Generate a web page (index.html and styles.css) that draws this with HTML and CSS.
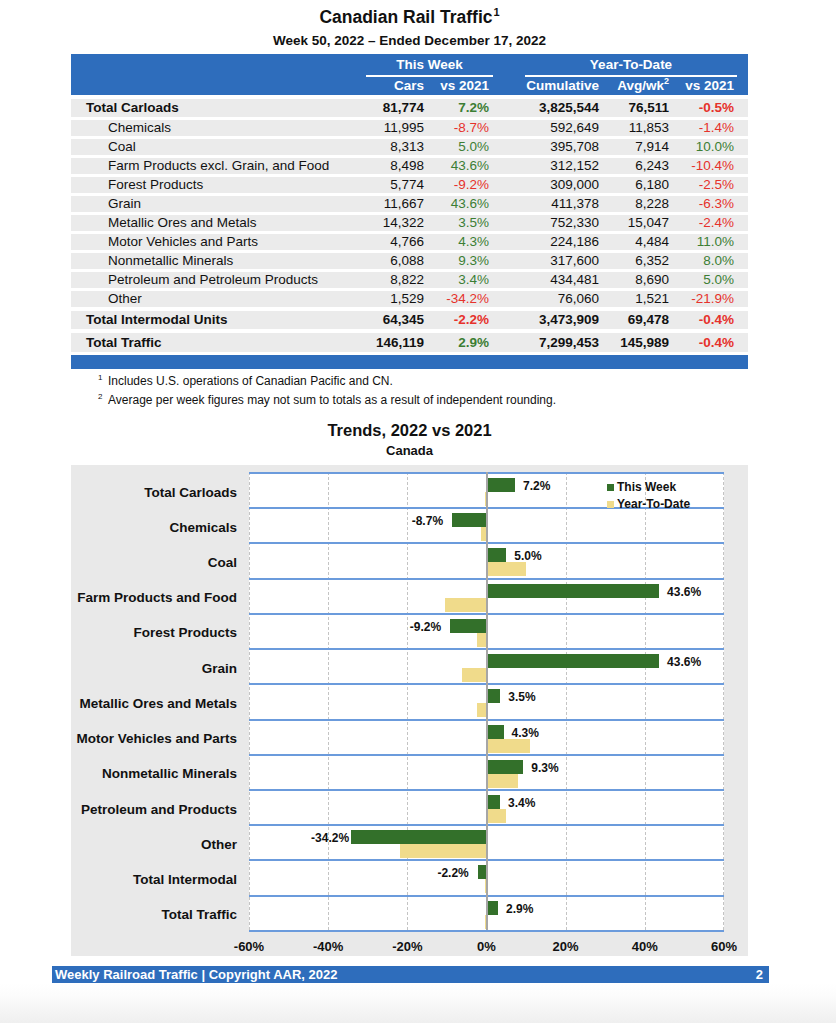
FILE: index.html
```html
<!DOCTYPE html>
<html lang="en">
<head>
<meta charset="utf-8">
<title>Canadian Rail Traffic</title>
<link rel="stylesheet" href="styles.css">
</head>
<body>
<div class="page">
  <div class="sheet">
    <h1 class="title">Canadian Rail Traffic<sup>1</sup></h1>
    <div class="subtitle">Week 50, 2022 – Ended December 17, 2022</div>

    <div class="tbl">
      <div class="thead">
        <div class="hrow1">
          <div class="grp grp-week">This Week</div>
          <div class="grp grp-ytd">Year-To-Date</div>
        </div>
        <div class="hrow2">
          <div></div>
          <div class="num">Cars</div>
          <div class="num c3">vs 2021</div>
          <div></div>
          <div class="num">Cumulative</div>
          <div class="num">Avg/wk<sup>2</sup></div>
          <div class="num c7">vs 2021</div>
          <div></div>
        </div>
      </div>

      <div class="row total first"><div class="lbl">Total Carloads</div><div class="num">81,774</div><div class="num c3 pos">7.2%</div><div></div><div class="num">3,825,544</div><div class="num">76,511</div><div class="num c7 neg">-0.5%</div><div></div></div>
      <div class="row"><div class="lbl sub">Chemicals</div><div class="num">11,995</div><div class="num c3 neg">-8.7%</div><div></div><div class="num">592,649</div><div class="num">11,853</div><div class="num c7 neg">-1.4%</div><div></div></div>
      <div class="row"><div class="lbl sub">Coal</div><div class="num">8,313</div><div class="num c3 pos">5.0%</div><div></div><div class="num">395,708</div><div class="num">7,914</div><div class="num c7 pos">10.0%</div><div></div></div>
      <div class="row"><div class="lbl sub">Farm Products excl. Grain, and Food</div><div class="num">8,498</div><div class="num c3 pos">43.6%</div><div></div><div class="num">312,152</div><div class="num">6,243</div><div class="num c7 neg">-10.4%</div><div></div></div>
      <div class="row"><div class="lbl sub">Forest Products</div><div class="num">5,774</div><div class="num c3 neg">-9.2%</div><div></div><div class="num">309,000</div><div class="num">6,180</div><div class="num c7 neg">-2.5%</div><div></div></div>
      <div class="row"><div class="lbl sub">Grain</div><div class="num">11,667</div><div class="num c3 pos">43.6%</div><div></div><div class="num">411,378</div><div class="num">8,228</div><div class="num c7 neg">-6.3%</div><div></div></div>
      <div class="row"><div class="lbl sub">Metallic Ores and Metals</div><div class="num">14,322</div><div class="num c3 pos">3.5%</div><div></div><div class="num">752,330</div><div class="num">15,047</div><div class="num c7 neg">-2.4%</div><div></div></div>
      <div class="row"><div class="lbl sub">Motor Vehicles and Parts</div><div class="num">4,766</div><div class="num c3 pos">4.3%</div><div></div><div class="num">224,186</div><div class="num">4,484</div><div class="num c7 pos">11.0%</div><div></div></div>
      <div class="row"><div class="lbl sub">Nonmetallic Minerals</div><div class="num">6,088</div><div class="num c3 pos">9.3%</div><div></div><div class="num">317,600</div><div class="num">6,352</div><div class="num c7 pos">8.0%</div><div></div></div>
      <div class="row"><div class="lbl sub">Petroleum and Petroleum Products</div><div class="num">8,822</div><div class="num c3 pos">3.4%</div><div></div><div class="num">434,481</div><div class="num">8,690</div><div class="num c7 pos">5.0%</div><div></div></div>
      <div class="row"><div class="lbl sub">Other</div><div class="num">1,529</div><div class="num c3 neg">-34.2%</div><div></div><div class="num">76,060</div><div class="num">1,521</div><div class="num c7 neg">-21.9%</div><div></div></div>
      <div class="row total gap"><div class="lbl">Total Intermodal Units</div><div class="num">64,345</div><div class="num c3 neg">-2.2%</div><div></div><div class="num">3,473,909</div><div class="num">69,478</div><div class="num c7 neg">-0.4%</div><div></div></div>
      <div class="row total gap tall"><div class="lbl">Total Traffic</div><div class="num">146,119</div><div class="num c3 pos">2.9%</div><div></div><div class="num">7,299,453</div><div class="num">145,989</div><div class="num c7 neg">-0.4%</div><div></div></div>
      <div class="endbar"></div>
    </div>

    <div class="notes">
      <p><span class="fn">1</span>Includes U.S. operations of Canadian Pacific and CN.</p>
      <p><span class="fn">2</span>Average per week figures may not sum to totals as a result of independent rounding.</p>
    </div>

    <h2 class="ctitle">Trends, 2022 vs 2021</h2>
    <div class="csub">Canada</div>

    <div class="chart">
      <div class="chart-body">
        <div class="cats">
          <div class="cat">Total Carloads</div>
          <div class="cat">Chemicals</div>
          <div class="cat">Coal</div>
          <div class="cat">Farm Products and Food</div>
          <div class="cat">Forest Products</div>
          <div class="cat">Grain</div>
          <div class="cat">Metallic Ores and Metals</div>
          <div class="cat">Motor Vehicles and Parts</div>
          <div class="cat">Nonmetallic Minerals</div>
          <div class="cat">Petroleum and Products</div>
          <div class="cat">Other</div>
          <div class="cat">Total Intermodal</div>
          <div class="cat">Total Traffic</div>
        </div>
        <div class="plot">
          <div class="gridlines"><span></span><span></span><span></span><span></span><span></span><span></span></div>
          <div class="prow"><div class="bar wk" style="left:237.5px;width:28.5px"></div><div class="bar ytd" style="left:235.52px;width:1.98px"></div><div class="val" style="left:274px">7.2%</div></div>
          <div class="prow"><div class="bar wk" style="left:203.06px;width:34.44px"></div><div class="bar ytd" style="left:231.96px;width:5.54px"></div><div class="val" style="right:280.94px">-8.7%</div></div>
          <div class="prow"><div class="bar wk" style="left:237.5px;width:19.79px"></div><div class="bar ytd" style="left:237.5px;width:39.58px"></div><div class="val" style="left:265.3px">5.0%</div></div>
          <div class="prow"><div class="bar wk" style="left:237.5px;width:172.58px"></div><div class="bar ytd" style="left:196.33px;width:41.17px"></div><div class="val" style="left:418.1px">43.6%</div></div>
          <div class="prow"><div class="bar wk" style="left:201.08px;width:36.42px"></div><div class="bar ytd" style="left:227.6px;width:9.9px"></div><div class="val" style="right:282.92px">-9.2%</div></div>
          <div class="prow"><div class="bar wk" style="left:237.5px;width:172.58px"></div><div class="bar ytd" style="left:212.56px;width:24.94px"></div><div class="val" style="left:418.1px">43.6%</div></div>
          <div class="prow"><div class="bar wk" style="left:237.5px;width:13.85px"></div><div class="bar ytd" style="left:228px;width:9.5px"></div><div class="val" style="left:259.35px">3.5%</div></div>
          <div class="prow"><div class="bar wk" style="left:237.5px;width:17.02px"></div><div class="bar ytd" style="left:237.5px;width:43.54px"></div><div class="val" style="left:262.5px">4.3%</div></div>
          <div class="prow"><div class="bar wk" style="left:237.5px;width:36.81px"></div><div class="bar ytd" style="left:237.5px;width:31.67px"></div><div class="val" style="left:282.3px">9.3%</div></div>
          <div class="prow"><div class="bar wk" style="left:237.5px;width:13.46px"></div><div class="bar ytd" style="left:237.5px;width:19.79px"></div><div class="val" style="left:258.96px">3.4%</div></div>
          <div class="prow"><div class="bar wk" style="left:102.13px;width:135.37px"></div><div class="bar ytd" style="left:150.81px;width:86.69px"></div><div class="val" style="right:374.87px">-34.2%</div></div>
          <div class="prow"><div class="bar wk" style="left:228.79px;width:8.71px"></div><div class="bar ytd" style="left:235.92px;width:1.58px"></div><div class="val" style="right:255.21px">-2.2%</div></div>
          <div class="prow"><div class="bar wk" style="left:237.5px;width:11.48px"></div><div class="bar ytd" style="left:235.92px;width:1.58px"></div><div class="val" style="left:256.98px">2.9%</div></div>
          <div class="zero"></div>
          <div class="legend">
            <div class="lg"><span class="sw sw-wk"></span>This Week</div>
            <div class="lg"><span class="sw sw-ytd"></span>Year-To-Date</div>
          </div>
        </div>
      </div>
      <div class="axis">
        <span>-60%</span><span>-40%</span><span>-20%</span><span>0%</span><span>20%</span><span>40%</span><span>60%</span>
      </div>
    </div>
  </div>

  <div class="footer">
    <span>Weekly Railroad Traffic | Copyright AAR, 2022</span>
    <span>2</span>
  </div>
  <div class="page-end"></div>
</div>
</body>
</html>
```

FILE: styles.css
```css
* { box-sizing: border-box; }

body {
  margin: 0;
  background: #fff;
  color: #111;
  font-family: "Liberation Sans", Arial, sans-serif;
}

.page {
  width: 836px;
}

.sheet {
  margin-left: 71px;
  width: 677px;
}

.title {
  margin: 7px 0 0;
  text-align: center;
  font-size: 17.5px;
  line-height: 21px;
  font-weight: bold;
}

.title sup {
  font-size: 11px;
  line-height: 0;
  vertical-align: 7px;
  margin-left: 1px;
}

.subtitle {
  margin-top: 5px;
  text-align: center;
  font-size: 13.5px;
  line-height: 16px;
  font-weight: bold;
}

/* ---------- table ---------- */
.tbl {
  margin-top: 5px;
  --cols: 295px 58px 69px 32px 74px 70px 68px 11px;
}

.thead {
  background: #2e6dbc;
  color: #fff;
  font-weight: bold;
  font-size: 13.5px;
  height: 41px;
}

.hrow1 {
  display: grid;
  grid-template-columns: var(--cols);
  height: 23px;
}

.grp {
  text-align: center;
  line-height: 21px;
  border-bottom: 2px solid #fff;
}

.grp-week { grid-column: 2 / 4; }
.grp-ytd { grid-column: 5 / 8; }

.hrow2 {
  display: grid;
  grid-template-columns: var(--cols);
  height: 18px;
  line-height: 18px;
}

.hrow2 sup {
  font-size: 9px;
  line-height: 0;
  vertical-align: 6px;
}

.row {
  display: grid;
  grid-template-columns: var(--cols);
  background: #ebebeb;
  height: 16px;
  line-height: 16px;
  margin-top: 3px;
  font-size: 13.5px;
  white-space: nowrap;
}

.row.first { margin-top: 4px; }
.row.total { height: 18px; line-height: 18px; font-weight: bold; }
.row.gap { margin-top: 4px; }
.row.tall { height: 19px; line-height: 19px; }

.lbl { padding-left: 15px; }
.lbl.sub { padding-left: 37px; }

.num { text-align: right; }
.c3 { padding-right: 4px; }
.c7 { padding-right: 3px; }

.pos { color: #3c7e34; }
.neg { color: #e6322c; }

.endbar {
  height: 14px;
  margin-top: 3px;
  background: #2e6dbc;
}

/* ---------- notes ---------- */
.notes {
  margin: 3px 0 0 27px;
  font-size: 12px;
  line-height: 19px;
}

.notes p { margin: 0; }

.fn {
  display: inline-block;
  width: 10px;
  font-size: 8px;
  vertical-align: 5px;
  line-height: 0;
}

/* ---------- chart ---------- */
.ctitle {
  margin: 10px 0 0;
  text-align: center;
  font-size: 16.5px;
  line-height: 20px;
  font-weight: bold;
}

.csub {
  margin-top: 3px;
  text-align: center;
  font-size: 13px;
  line-height: 16px;
  font-weight: bold;
}

.chart {
  margin-top: 6px;
  background: #e9e9e9;
  padding: 7px 0 1px;
}

.chart-body {
  display: grid;
  grid-template-columns: 178px 475px;
}

.cats {
  display: flex;
  flex-direction: column;
}

.cat {
  height: 35.23px;
  padding: 5px 12px 0 0;
  display: flex;
  align-items: center;
  justify-content: flex-end;
  font-size: 13.5px;
  font-weight: bold;
  white-space: nowrap;
}

.plot {
  position: relative;
  background: #fff;
  border-bottom: 2px solid #6b9bdc;
}

.gridlines {
  position: absolute;
  inset: 0;
  display: grid;
  grid-template-columns: repeat(6, 1fr);
}

.gridlines span { border-left: 1px dashed #c4c4c4; }
.gridlines span:last-child { border-right: 1px dashed #c4c4c4; }

.prow {
  position: relative;
  height: 35.23px;
  border-top: 2px solid #6b9bdc;
}

.bar {
  position: absolute;
  height: 14px;
}

.bar.wk { top: 4px; background: #33702a; }
.bar.ytd { top: 18px; background: #f0db8b; }

.val {
  position: absolute;
  top: 5px;
  line-height: 15px;
  font-size: 12px;
  font-weight: bold;
  white-space: nowrap;
}

.zero {
  position: absolute;
  top: 0;
  bottom: 0;
  left: 236.5px;
  width: 2px;
  background: #a6a6a6;
}

.legend {
  position: absolute;
  left: 358px;
  top: 7px;
  font-size: 12px;
  font-weight: bold;
  line-height: 17px;
}

.lg {
  display: flex;
  align-items: center;
}

.sw {
  width: 7px;
  height: 7px;
  margin-right: 3px;
}

.sw-wk { background: #33702a; }
.sw-ytd { background: #f0db8b; }

.axis {
  display: flex;
  justify-content: space-between;
  width: 515px;
  margin: 7px 0 0 158px;
  font-size: 13px;
  line-height: 16px;
  font-weight: bold;
}

.axis span {
  width: 40px;
  text-align: center;
}

/* ---------- footer ---------- */
.footer {
  margin: 10px 0 0 52px;
  width: 717px;
  height: 17px;
  background: #2e6dbc;
  color: #fff;
  font-size: 13px;
  line-height: 17px;
  font-weight: bold;
  display: flex;
  justify-content: space-between;
  padding: 0 6px 0 3px;
}

.page-end {
  height: 40px;
  background: linear-gradient(#fff 0%, #fcfcfc 30%, #efefef 100%);
}
```
